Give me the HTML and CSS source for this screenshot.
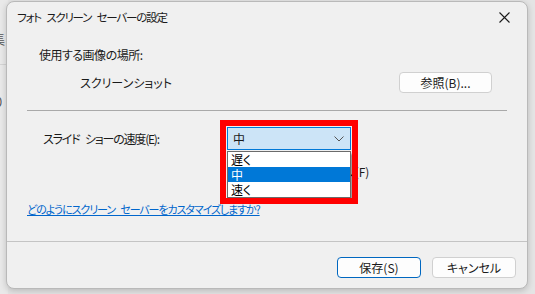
FILE: index.html
```html
<!DOCTYPE html>
<html lang="ja">

<head>
    <meta charset="UTF-8">
    <meta name="viewport" content="width=device-width, initial-scale=1.0">
    <title>フォト スクリーン セーバーの設定</title>

    <link rel="stylesheet" href="styles.css">
</head>

<body>
    <div class="backdrop">
        <span class="ghost ghost1">集</span>
        <span class="ghost ghost2">り</span>
    </div>

    <div class="dialog">
        <div class="titlebar">
            <span class="title">フォト スクリーン セーバーの設定</span>
            <span class="close">
                <svg width="11" height="11" viewBox="0 0 11 11">
                    <path d="M0.5 0.5 L10.5 10.5 M10.5 0.5 L0.5 10.5" stroke="#1a1a1a" stroke-width="1.1" fill="none" />
                </svg>
            </span>
        </div>

        <div class="content">
            <div class="caption">使用する画像の場所:</div>
            <div class="location">
                <span class="path">スクリーンショット</span>
                <div class="btn browse">参照(B)...</div>
            </div>

            <div class="rule"></div>

            <div class="speed">
                <span class="speedLabel">スライド ショーの速度(E):</span>
                <div class="comboWrap">
                    <div class="combo">
                        <span>中</span>
                        <svg width="10" height="6" viewBox="0 0 10 6">
                            <path d="M0.5 0.5 L5 5 L9.5 0.5" stroke="#555" stroke-width="1" fill="none" />
                        </svg>
                    </div>
                    <div class="list">
                        <div class="item">遅く</div>
                        <div class="item selected">中</div>
                        <div class="item">速く</div>
                    </div>
                    <div class="mark"></div>
                </div>
            </div>

            <div class="shuffle">
                <span class="check"></span>
                <span>画像をシャッフル(F)</span>
            </div>

            <a class="help" href="#">どのようにスクリーン セーバーをカスタマイズしますか?</a>
        </div>

        <div class="footer">
            <div class="btn save">保存(S)</div>
            <div class="btn">キャンセル</div>
        </div>
    </div>
</body>

</html>
```

FILE: styles.css
```css
body {
    margin: 0;
    width: 535px;
    height: 294px;
    overflow: hidden;
    background-color: #e4e4e4;
    font-family: "Noto Sans CJK JP", "Noto Sans", sans-serif;
    font-size: 12px;
    font-feature-settings: "palt";
    color: #1a1a1a;
    position: relative;
}

.backdrop {
    position: absolute;
    left: 0;
    top: 0;
    width: 8px;
    height: 294px;
    background: linear-gradient(#e9e9e9 0, #e9e9e9 64px, #d4d4d4 64px, #d4d4d4 65px, #e9e9e9 65px);
}

.ghost {
    position: absolute;
    left: -8px;
    color: #555;
    font-size: 13px;
}

.ghost1 {
    top: 29px;
}

.ghost2 {
    top: 92px;
}

.dialog {
    position: absolute;
    left: 6px;
    top: 1px;
    width: 522px;
    height: 288px;
    box-sizing: border-box;
    border: 1px solid #b9b9b9;
    border-radius: 8px;
    background-color: #f0f0f0;
    box-shadow: 0 2px 6px rgba(0, 0, 0, 0.18);
    display: flex;
    flex-direction: column;
}

.titlebar {
    height: 30px;
    display: flex;
    align-items: center;
    justify-content: space-between;
    padding: 0 17px 0 10px;
}

.title {
    font-size: 11.5px;
    letter-spacing: -1.2px;
    word-spacing: 4px;
}

.close {
    display: flex;
}

.content {
    flex: 1;
    padding: 0 20px;
}

.caption {
    margin: 15px 0 0 12px;
    line-height: 16px;
    letter-spacing: -0.5px;
}

.location {
    display: flex;
    align-items: center;
    justify-content: space-between;
    margin-top: 9px;
    padding-left: 53px;
    padding-right: 15px;
}

.btn {
    box-sizing: border-box;
    width: 84px;
    height: 21px;
    line-height: 19px;
    text-align: center;
    background-color: #fdfdfd;
    border: 1px solid #d0d0d0;
    border-radius: 4px;
}

.browse {
    width: 93px;
}

.rule {
    margin-top: 17px;
    height: 1px;
    background-color: #a9a9a9;
}

.speed {
    display: flex;
    align-items: center;
    margin-top: 16px;
}

.speedLabel {
    width: 184px;
    padding-left: 16px;
    letter-spacing: -1.2px;
    word-spacing: 4px;
}

.comboWrap {
    position: relative;
}

.combo {
    box-sizing: border-box;
    width: 124px;
    height: 23px;
    display: flex;
    align-items: center;
    justify-content: space-between;
    padding: 0 6px 0 5px;
    background-color: #cce4f7;
    border: 1px solid #0078d7;
}

.list {
    position: absolute;
    left: 0;
    top: 24px;
    width: 124px;
    box-sizing: border-box;
    background-color: #fff;
    border: 1px solid #6b6b6b;
    box-shadow: 3px 3px 2px rgba(0, 0, 0, 0.35);
    z-index: 2;
}

.item {
    height: 15px;
    line-height: 15px;
    padding-left: 3px;
    color: #000;
}

.item.selected {
    background-color: #0078d7;
    color: #fff;
}

.mark {
    position: absolute;
    left: -7px;
    top: -7px;
    width: 138px;
    height: 84px;
    box-sizing: border-box;
    border: 6px solid #ff0000;
    z-index: 3;
}

.shuffle {
    display: flex;
    align-items: center;
    gap: 5px;
    margin: 14px 0 0 225px;
    line-height: 16px;
}

.check {
    width: 11px;
    height: 11px;
    box-sizing: border-box;
    border: 1px solid #333;
    background-color: #fff;
}

.help {
    display: inline-block;
    margin-top: 21px;
    line-height: 16px;
    font-size: 11px;
    letter-spacing: -1.1px;
    word-spacing: 4px;
    color: #0066cc;
    text-decoration: underline;
}

.footer {
    height: 47px;
    border-top: 1px solid #c4c4c4;
    display: flex;
    justify-content: flex-end;
    align-items: flex-start;
    gap: 11px;
    padding: 15px 11px 0 0;
    box-sizing: border-box;
}

.save {
    border-color: #0067c0;
}
```
